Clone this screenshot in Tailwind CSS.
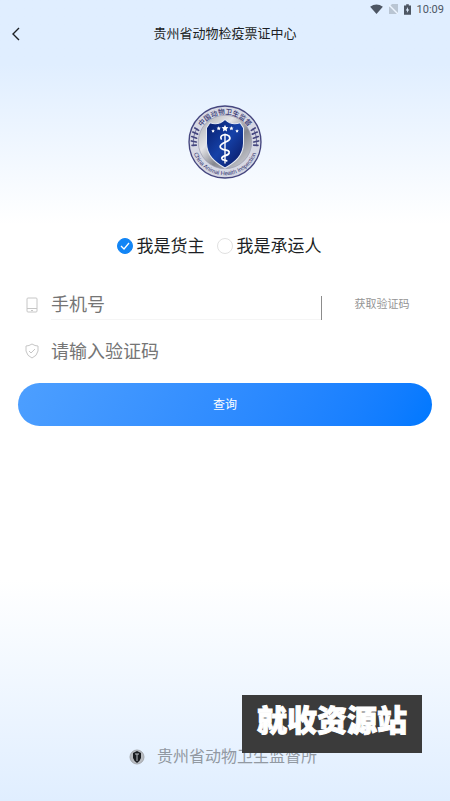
<!DOCTYPE html>
<html lang="zh-CN">
<head>
  <meta charset="UTF-8" />
  <meta name="viewport" content="width=device-width, initial-scale=1" />
  <title>贵州省动物检疫票证中心</title>
  <script src="https://cdn.jsdelivr.net/npm/@tailwindcss/browser@4"></script>
</head>
<body class="relative flex min-h-screen flex-col bg-linear-to-b from-[#e0eeff] from-8% via-white via-28% to-white font-['Roboto','Noto_Sans_CJK_SC',sans-serif] text-[#1c1f24]">
  <!-- Status bar -->
  <div class="flex h-[18px] items-center justify-end gap-[6px] pr-[6px] text-[#4d5663]">
    <svg class="h-[10px] w-[13px]" viewBox="0 0 14 11" fill="currentColor"><path d="M0 3Q7-2 14 3L7 11Z" /></svg>
    <svg class="h-[10px] w-[9px]" viewBox="0 0 9 10"><path d="M3 0H9V10H0V3Z" fill="#b9c5d3" /><path d="M0 1L9 10" stroke="#edf5ff" stroke-width="1.5" /></svg>
    <svg class="h-[11px] w-[7px]" viewBox="0 0 8 12"><path d="M2.500 0H5.500V1.500H8V12H0V1.500H2.500Z" fill="currentColor" /><path d="M4.500 3L2 7H3.600L3.300 10L6 6H4.500Z" fill="#e0edff" /></svg>
    <span class="text-[11px] leading-none">10:09</span>
  </div>

  <header class="grid h-8 grid-cols-[48px_1fr_48px] items-center">
    <button type="button" aria-label="返回" class="flex h-full items-center pl-3">
      <svg class="h-[14px] w-2" viewBox="0 0 8 14" fill="none" stroke="currentColor" stroke-width="1.400"><path d="M7 1L1 7L7 13" /></svg>
    </button>
    <h1 class="text-center text-[13px]">贵州省动物检疫票证中心</h1>
  </header>

  <main class="flex-1">
    <!-- Emblem -->
    <svg class="mx-auto mt-[55px] size-[74px]" viewBox="27 24 216 216">
      <defs>
        <linearGradient id="silver" x1="0" y1="0" x2="1" y2="1">
          <stop offset="0" stop-color="#a3a5ab" />
          <stop offset=".35" stop-color="#e5e5e8" />
          <stop offset=".6" stop-color="#85878f" />
          <stop offset="1" stop-color="#dddee3" />
        </linearGradient>
        <linearGradient id="blue" x1="0" y1="0" x2="1" y2="1">
          <stop offset="0" stop-color="#071b68" />
          <stop offset=".5" stop-color="#1541a8" />
          <stop offset="1" stop-color="#09145c" />
        </linearGradient>
        <path id="arcTop" d="M54 132A81 81 0 0 1 216 132" />
        <path id="arcBottom" d="M38 132A97 97 0 0 0 232 132" />
      </defs>
      <circle cx="135" cy="132" r="105" fill="#d6d8e4" stroke="#45467f" stroke-width="4" />
      <circle cx="135" cy="132" r="78" fill="url(#silver)" stroke="#9a9cb0" stroke-width="2" />
      <path d="M135 66C125 76 108 82 91 76L81 91V136C82 172 105 191 135 208C165 191 188 172 189 136V91L179 76C162 82 145 76 135 66Z" fill="url(#blue)" stroke="#e4e8f2" stroke-width="3" />
      <g fill="#fff">
        <path id="star" d="M135 82L138 88L145 89L140 94L141 101L135 98L129 101L130 94L125 89L132 88Z" />
        <use href="#star" transform="translate(33 35) scale(.62)" />
        <use href="#star" transform="translate(70 35) scale(.62)" />
        <use href="#star" transform="translate(30 52) scale(.52)" />
        <use href="#star" transform="translate(100 52) scale(.52)" />
      </g>
      <path d="M135 108V195" stroke="#fff" stroke-width="4" />
      <path d="M124 123C118 111 137 107 147 115C159 132 119 132 121 146C123 159 150 151 147 164C145 174 123 170 126 181C128 187 137 184 140 187" fill="none" stroke="#fff" stroke-width="5" stroke-linecap="round" />
      <g fill="none" stroke="#45467f" stroke-width="5" stroke-linecap="round">
        <path d="M53 93Q40 112 43 143" stroke-width="2" />
        <path d="M47 91L58 98M41 103L55 109M38 116L52 121M37 129L51 132M39 142L51 141" />
        <path d="M217 93Q230 112 227 143" stroke-width="2" />
        <path d="M223 91L212 98M229 103L215 109M232 116L218 121M233 129L219 132M231 142L219 141" />
      </g>
      <g fill="#33346f">
        <text font-size="20" font-weight="500" font-family="Noto Sans CJK SC, sans-serif" text-anchor="middle"><textPath href="#arcTop" startOffset="50%">中国动物卫生监督</textPath></text>
        <text font-size="17" font-family="Liberation Sans, sans-serif" text-anchor="middle"><textPath href="#arcBottom" startOffset="50%">China Animal Health Inspection</textPath></text>
      </g>
    </svg>

    <form>
      <div class="mt-[55px] flex h-6 items-center justify-center gap-3 pr-3 text-[17px] leading-6">
        <label class="flex items-center gap-1">
          <span class="grid size-4 place-items-center">
            <input type="radio" name="role" checked class="peer col-start-1 row-start-1 size-4 appearance-none rounded-full border border-[#e1e1e1] checked:border-[#1285f5] checked:bg-[#1285f5]" />
            <svg class="col-start-1 row-start-1 hidden size-[10px] peer-checked:block" viewBox="0 0 10 10" fill="none" stroke="#fff" stroke-width="1.300"><path d="M1 5L4 8L9 2" /></svg>
          </span>
          我是货主
        </label>
        <label class="flex items-center gap-1">
          <input type="radio" name="role" class="size-4 appearance-none rounded-full border border-[#e1e1e1] bg-white" />
          我是承运人
        </label>
      </div>

      <div class="mt-8 flex h-[30px] items-end px-6">
        <label for="phone" aria-label="手机号" class="flex h-full w-[27px] shrink-0 items-center">
          <svg class="size-4" viewBox="0 0 16 16" fill="none" stroke="#c6c6c6"><rect x="3" y="1" width="10" height="14" rx="1" /><path d="M3 11.500H13M7 13.500H9" /></svg>
        </label>
        <input id="phone" type="tel" placeholder="手机号" class="h-full min-w-0 flex-1 border-b border-[#f5f5f5] text-[18px] outline-none placeholder:text-[#757575]" />
        <span class="h-6 w-px bg-[#8c8c8c]"></span>
        <button type="button" class="h-full w-[104px] pl-4 text-center text-[11px] text-[#949494]">获取验证码</button>
      </div>

      <div class="mt-4 flex h-[30px] items-center px-6">
        <label for="code" aria-label="验证码" class="flex w-[27px] shrink-0">
          <svg class="size-4" viewBox="0 0 16 16" fill="none" stroke="#c6c6c6"><path d="M8 1Q11 3 14 3V8Q13 13 8 15Q3 13 2 8V3Q5 3 8 1ZM5 8L7 10L11 6" /></svg>
        </label>
        <input id="code" type="text" placeholder="请输入验证码" class="h-full min-w-0 flex-1 text-[18px] outline-none placeholder:text-[#757575]" />
      </div>

      <div class="mt-[17px] px-[18px]">
        <button type="button" class="h-[43px] w-full rounded-full bg-linear-120 from-[#4d9fff] to-[#0078ff] text-[12px] text-white">查询</button>
      </div>
    </form>
  </main>

  <footer class="flex h-[221px] items-end justify-center gap-3 bg-linear-to-b from-white to-[#e0eeff] pr-1 pb-8 text-[16px] leading-6 text-[#9299a2]">
    <svg class="mb-1 size-4" viewBox="0 0 16 16">
      <circle cx="8" cy="8" r="7" fill="#b9bcc1" stroke="#a5a9af" />
      <path d="M8 2L12 4V9Q11 12 8 14Q5 12 4 9V4Z" fill="#191c20" />
      <path d="M8 5V12M6 5H10" stroke="#b9bcc1" />
    </svg>
    <span>贵州省动物卫生监督所</span>
  </footer>

  <!-- Site label, lies over the footer -->
  <div class="absolute right-7 bottom-12 flex h-[58px] w-[180px] items-center justify-center bg-[#3b3b3b] pb-3 font-['Noto_Sans_CJK_SC',sans-serif] text-[30px] leading-none font-black text-white [-webkit-text-stroke:1px_white]">就收资源站</div>
</body>
</html>
